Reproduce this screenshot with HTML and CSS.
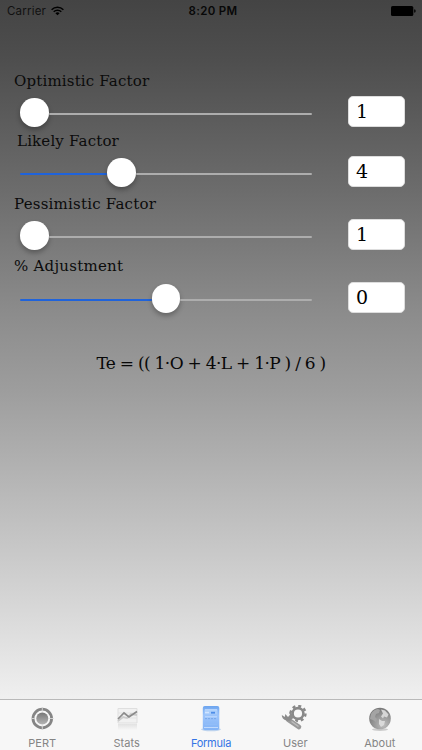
FILE: index.html
```html
<!DOCTYPE html>
<html lang="en">
<head>
<meta charset="utf-8">
<title>Formula</title>
<link rel="stylesheet" href="styles.css">
</head>
<body>
<div class="screen">
  <header class="status">
    <div class="carrier"><span>Carrier</span>
      <svg width="13" height="10" viewBox="0 0 13 10" fill="none" stroke="#000" stroke-width="1.5"><path d="M.6 3.7a8.4 8.4 0 0 1 11.8 0M2.7 5.8a5.4 5.4 0 0 1 7.6 0"/><path d="M6.5 9.2 4.4 7.2a3 3 0 0 1 4.2 0z" fill="#000" stroke="none"/></svg>
    </div>
    <div class="time">8:20 PM</div>
    <svg class="battery" width="25" height="10" viewBox="0 0 25 10"><rect width="22.3" height="10" rx="1.6"/><path d="M23.2 3.2q1.5.3 1.5 1.8t-1.5 1.8z"/></svg>
  </header>
  <main>
    <section class="factor optimistic">
      <h2>Optimistic Factor</h2>
      <div class="control"><div class="slider"><i class="fill"></i><b class="knob"></b><i class="rest"></i></div><output>1</output></div>
    </section>
    <section class="factor likely">
      <h2>Likely Factor</h2>
      <div class="control"><div class="slider"><i class="fill"></i><b class="knob"></b><i class="rest"></i></div><output>4</output></div>
    </section>
    <section class="factor pessimistic">
      <h2>Pessimistic Factor</h2>
      <div class="control"><div class="slider"><i class="fill"></i><b class="knob"></b><i class="rest"></i></div><output>1</output></div>
    </section>
    <section class="factor adjustment">
      <h2>% Adjustment</h2>
      <div class="control"><div class="slider"><i class="fill"></i><b class="knob"></b><i class="rest"></i></div><output>0</output></div>
    </section>
    <p class="formula">Te = (( 1·O + 4·L + 1·P ) / 6 )</p>
  </main>
  <nav>
    <a class="tab">
      <svg width="28" height="28" viewBox="0 0 28 28"><defs><linearGradient id="g" x2="0" y2="1"><stop stop-color="#777"/><stop offset="1" stop-color="#b5b5b5"/></linearGradient></defs><circle cx="14.300" cy="13.500" r="9.300" fill="none" stroke="#858585" stroke-width="2.800"/><circle cx="14.300" cy="13.500" r="6" fill="url(#g)"/><path d="M14.300 2.500v4M14.300 20.500v4M3 13.500h4M21.500 13.500h4" stroke="#d0d0d0" stroke-width="1"/></svg>
      <span>PERT</span>
    </a>
    <a class="tab">
      <svg width="28" height="28" viewBox="0 0 28 28"><defs><linearGradient id="r" x2="0" y2="1"><stop stop-color="#e2e2e2"/><stop offset="1" stop-color="#f7f7f7"/></linearGradient></defs><path d="M5 19h19v6H5z" fill="url(#r)"/><path d="M5 3.500h19v14.500H5z" fill="#f1f1f1" stroke="#dfdfdf"/><path d="M5 8h19M5 13h19" stroke="#e3e3e3"/><path d="m5 16 5-4 4 1 4-4 6 1" fill="none" stroke="#cbcbcb" stroke-width="1.800"/><path d="m5 14 6-6 5 4 8-5.500" fill="none" stroke="#8b8b8b" stroke-width="1.700"/></svg>
      <span>Stats</span>
    </a>
    <a class="tab active">
      <svg width="28" height="28" viewBox="0 0 28 28"><defs><linearGradient id="b" x2="0" y2="1"><stop stop-color="#6da5ef"/><stop offset=".4" stop-color="#9cc4fb"/><stop offset="1" stop-color="#82b3f6"/></linearGradient></defs><ellipse cx="14" cy="24.300" rx="10" ry="2" fill="#bdd3ee"/><rect x="5.800" y="1" width="16.500" height="24" rx="2" fill="url(#b)"/><path d="M7.500 4.500h13v5h-13z" fill="#a9cdfb"/><path d="M8 4.800h12M8 11.800h12" stroke="#c4dcfe"/><path d="M8 7.500h4" stroke="#d2e5ff" stroke-width="1.500"/><path d="M14 7.700h4" stroke="#4d8de8" stroke-width="1.800"/><path d="M8 13.600h12" stroke="#719fe2" stroke-width=".8" stroke-dasharray="2 1"/><path d="M8 16.500h12M8 19.500h12" stroke="#91bdf8"/><path d="M7 22.500h14" stroke="#c0dafd"/></svg>
      <span>Formula</span>
    </a>
    <a class="tab">
      <svg width="28" height="28" viewBox="0 0 28 28"><circle cx="17" cy="8.500" r="5.400" fill="none" stroke="#888" stroke-width="2.600"/><circle cx="17" cy="8.500" r="7.500" fill="none" stroke="#888" stroke-width="2.400" stroke-dasharray="3 2.890"/><path d="m8 15 10 8" stroke="#f6f6f6" stroke-width="6.500"/><path d="m7 14.500 11 7.500" stroke="#999" stroke-width="4.600" stroke-linecap="round"/><path d="m10.500 16.500 7 5" stroke="#bbb" stroke-width="1.500"/><path d="M4.300 9 7 12 9 9.800 8 7.500c3 .3 4.500 2.400 3.600 5-.8 2.800-3.400 4-6 3C2.500 14.700.6 12.600.8 10l3 2z" fill="#8b8b8b"/></svg>
      <span>User</span>
    </a>
    <a class="tab">
      <svg width="28" height="28" viewBox="0 0 28 28"><defs><radialGradient id="e" cx=".65" cy=".8" r=".8"><stop stop-color="#bdbdbd"/><stop offset="1" stop-color="#777"/></radialGradient></defs><ellipse cx="14" cy="24.500" rx="8" ry="1.500" fill="#ccc"/><circle cx="14" cy="13.500" r="10.800" fill="url(#e)"/><path d="M5 9c1.600-3 4-4.500 7-5l2 1-1 3-3 1-1 3 2 2-1 3-3-2-3-1z" fill="#a4a4a4"/><path d="m15 4.500 4 1 3.500 4-1.500 3-3-1-1 2-2-2 2-3z" fill="#d6d6d6"/><path d="m13 14 3 2h3l-1 4-3 2-2-3z" fill="#dadada"/></svg>
      <span>About</span>
    </a>
  </nav>
</div>
</body>
</html>
```
FILE: styles.css
```css
* { box-sizing: border-box; }
body { margin: 0; font-family: Inter, "Liberation Sans", sans-serif; }
.screen {
  width: 422px;
  height: 750px;
  display: flex;
  flex-direction: column;
  overflow: hidden;
  background: linear-gradient(#444 0, #4e4e4e 60px, #6c6c6c 190px, #8b8b8b 310px, #9d9d9d 390px, #f0f0f0 700px);
}
.status {
  height: 21px;
  display: grid;
  grid-template-columns: 1fr auto 1fr;
  align-items: center;
  padding: 0 6px 0 7px;
  font-size: 11.5px;
}
.carrier { display: flex; align-items: center; gap: 5px; letter-spacing: .2px; color: #111; }
.time { padding-left: 3px; font-weight: 600; letter-spacing: .35px; color: #080808; }
.battery { justify-self: end; }
main { flex: 1; padding-top: 49.5px; font-family: "DejaVu Serif", serif; }
.factor { padding: 0 17px 0 14px; margin-bottom: 3.5px; }
h2 { margin: 0 0 5.5px; height: 20px; font-size: 15px; font-weight: 400; line-height: 20px; color: #0b0b0b; letter-spacing: .17px; }
.control { display: flex; align-items: center; justify-content: space-between; height: 31px; }
.slider { width: 292px; height: 28px; margin: 2px 0 0 6px; display: flex; align-items: center; }
.fill, .rest { height: 2px; margin-top: 2px; border-radius: 1px; }
.fill { width: 0; background: #1f63db; }
.rest { flex: 1; background: #adadad; }
.knob { width: 28.5px; height: 28.5px; border-radius: 50%; background: #fff; box-shadow: 0 3px 5px rgba(0,0,0,.28); }
output { width: 57px; height: 31px; padding-left: 7px; border-radius: 5px; background: #fff; border: 1px solid #ddd; font-size: 19px; line-height: 29px; color: #000; }
.likely h2 { padding-left: 3px; }
.likely .fill { width: 87px; }
.likely { margin-bottom: 6.5px; }
.pessimistic { margin-bottom: 5.5px; }
.pessimistic h2 { letter-spacing: .22px; }
.adjustment .fill { width: 131.5px; }
.adjustment h2 { margin-bottom: 6.5px; letter-spacing: .25px; }
.formula { margin: 37px 0 0; height: 26px; line-height: 26px; text-align: center; font-size: 17px; letter-spacing: -.55px; word-spacing: -.4px; color: #080808; }
nav {
  height: 51px;
  display: grid;
  grid-template-columns: repeat(5, 1fr);
  background: #f7f7f7;
  border-top: 1px solid #b9b9b9;
}
.tab { display: flex; flex-direction: column; align-items: center; padding-top: 5px; font-size: 11px; line-height: 14px; color: #858585; letter-spacing: 0; }
.tab span { margin-top: 3px; }
.tab.active { color: #3474e5; letter-spacing: -.25px; }
```
